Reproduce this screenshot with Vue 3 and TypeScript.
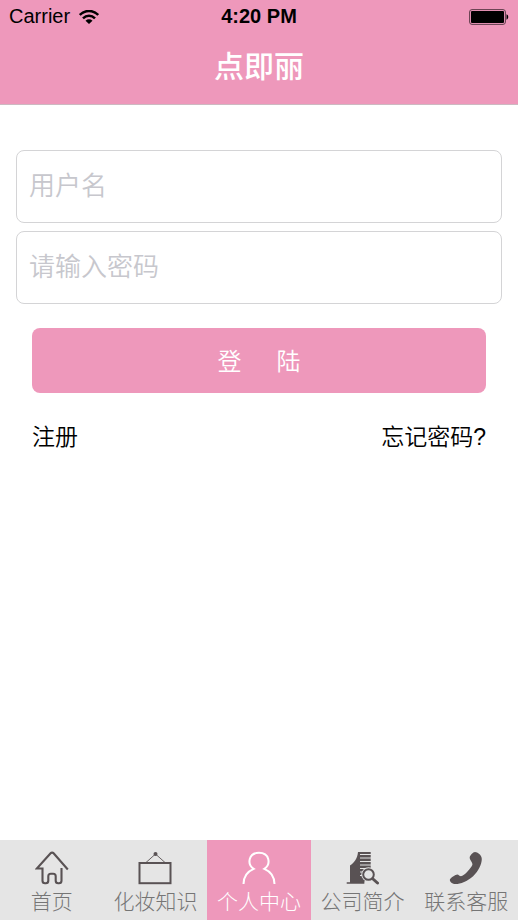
<script setup lang="ts">
import { ref } from 'vue'

interface Tab {
  id: string
  label: string
}

const tabs: Tab[] = [
  { id: 'home', label: '首页' },
  { id: 'makeup', label: '化妆知识' },
  { id: 'profile', label: '个人中心' },
  { id: 'company', label: '公司简介' },
  { id: 'service', label: '联系客服' },
]

const activeTab = ref('profile')
const username = ref('')
const password = ref('')
</script>

<template>
  <div class="screen">
    <header class="header">
      <div class="status">
        <div class="carrier">
          <span>Carrier</span>
          <svg class="wifi" viewBox="0 0 20 14" aria-hidden="true">
            <path d="M.8 5C6-.4 14-.4 19.200 5M4 8.400c3.500-3.500 8.500-3.500 12 0" fill="none" stroke="#000" stroke-width="2.500" />
            <path d="M10 14 6.500 10.700c2.100-1.800 4.900-1.800 7 0z" fill="#000" />
          </svg>
        </div>
        <span class="time">4:20 PM</span>
        <svg class="battery" viewBox="0 0 40 16" aria-hidden="true">
          <rect x=".6" y=".6" width="35.800" height="14.800" rx="2.400" fill="none" stroke="#5f3d4b" stroke-width="1" />
          <rect x="2" y="2" width="33" height="12" rx="1" fill="#000" />
          <path d="M37.500 5.300c2.300.8 2.300 4.600 0 5.400z" fill="#000" />
        </svg>
      </div>
      <h1 class="title">点即丽</h1>
    </header>

    <main class="content">
      <form class="form" @submit.prevent>
        <input v-model="username" class="field" type="text" placeholder="用户名" aria-label="用户名" />
        <input v-model="password" class="field" type="password" placeholder="请输入密码" aria-label="请输入密码" />
        <button class="submit" type="submit"><span>登</span><span>陆</span></button>
      </form>
      <div class="links">
        <a href="#register">注册</a>
        <a href="#forgot">忘记密码?</a>
      </div>
    </main>

    <nav class="tabs">
      <a
        v-for="tab in tabs"
        :key="tab.id"
        :href="'#' + tab.id"
        class="tab"
        :class="{ active: tab.id === activeTab }"
        @click="activeTab = tab.id"
      >
        <svg class="icon" viewBox="0 0 34 34" fill="none" stroke="currentColor" aria-hidden="true">
          <path
            v-if="tab.id === 'home'"
            d="M26.500 17v12.700a2.500 2.500 0 0 1-2.500 2.500h-.8a2.500 2.500 0 0 1-2.500-2.500v-4.400a2.500 2.500 0 0 0-2.500-2.500h-2.400a2.500 2.500 0 0 0-2.500 2.500v4.400a2.500 2.500 0 0 1-2.500 2.500h-.8a2.500 2.500 0 0 1-2.500-2.500V17.500H1.800L15.600 2.300a2 2 0 0 1 3 0L32.800 18.500"
            stroke-width="2.100"
          />
          <template v-else-if="tab.id === 'makeup'">
            <rect x="1.500" y="12" width="31" height="20.200" stroke-width="2" />
            <path d="M8 11.500 17.500 3 27 11.500" stroke-width=".9" />
            <circle cx="17.500" cy="3" r="2" fill="currentColor" stroke="none" />
          </template>
          <path
            v-else-if="tab.id === 'profile'"
            d="M1.500 33c0-7.500 3.800-12.500 10.200-15.200C4.700 13.200 6.500 1.800 17 1.800s12.300 11.400 5.300 16C28.700 20.500 32.500 25.500 32.500 33"
            stroke-width="2"
          />
          <template v-else-if="tab.id === 'company'">
            <path d="M.7 31.200H4V14.500c4-2.500 7.500-7 8-13.500h12.700V31.200h-6v1.600H.7z" fill="currentColor" stroke="none" />
            <path d="M14 3.500h11M14 7h11M14 10.500h11M14 14h11M14 17.500h11M14 21h4M14 24.500h3" stroke="#e5e5e5" stroke-width="1" />
            <path d="M18.500 29.500 26 28v5h-7.500z" fill="#e5e5e5" stroke="none" />
            <circle cx="22.500" cy="23.500" r="7.200" fill="#e5e5e5" stroke="none" />
            <circle cx="22.500" cy="23.500" r="5.300" stroke-width="2" />
            <path d="m27 28 4.500 4" stroke-width="3" stroke-linecap="round" />
          </template>
          <path
            v-else
            d="M20.700 6.300c.3-2 3.300-5.300 5.300-5.300 2.500 0 6.800 3 6.800 7 0 5-3.500 12.500-8.700 17.200C18.500 30.200 11.500 33 6.600 33 3.500 33 .5 31 .9 28.500c.2-1.500 5.800-5.100 7.400-5.100 1.500 0 2.500 2.200 4.300 1.700 3-.8 9.200-7.600 10.700-11.100.9-2-3-5.200-2.600-7.700z"
            fill="currentColor"
            stroke="none"
          />
        </svg>
        <span>{{ tab.label }}</span>
      </a>
    </nav>
  </div>
</template>

<style>
body {
  margin: 0;
}
</style>

<style scoped>
.screen {
  display: flex;
  flex-direction: column;
  min-height: 100vh;
  background: #fff;
  color: #000;
  font-family: "Liberation Sans", "Noto Sans CJK SC", sans-serif;
}

.header {
  background: #ee98bb;
  border-bottom: 1px solid #cdb9c1;
}

.status {
  display: grid;
  grid-template-columns: 1fr auto 1fr;
  align-items: center;
  height: 33px;
  padding: 0 9px;
  font-size: 20px;
}

.carrier {
  display: flex;
  align-items: center;
  gap: 9px;
}

.wifi {
  width: 20px;
  height: 14px;
}

.time {
  font-weight: 700;
}

.battery {
  width: 40px;
  height: 16px;
  justify-self: end;
}

.title {
  margin: 0;
  height: 71px;
  color: #fff;
  font-size: 30px;
  font-weight: 500;
  line-height: 68px;
  text-align: center;
}

.content {
  flex: 1;
  padding: 45px 16px 0;
}

.form {
  display: flex;
  flex-direction: column;
  gap: 8px;
}

.field {
  box-sizing: border-box;
  width: 100%;
  height: 73px;
  padding: 0 12px;
  border: 1px solid #d4d4d6;
  border-radius: 8px;
  background: #fff;
  color: #000;
  font: inherit;
  font-size: 26px;
  font-weight: 350;
}

.field::placeholder {
  color: #c7c7cd;
  opacity: 1;
}

.submit {
  display: flex;
  align-items: center;
  justify-content: center;
  gap: 35px;
  height: 65px;
  margin: 16px 16px 0;
  padding: 0 0 2px;
  border: 0;
  border-radius: 8px;
  background: #ee98bb;
  color: #fff;
  font: inherit;
  font-size: 24px;
  font-weight: 350;
}

.links {
  display: flex;
  justify-content: space-between;
  padding: 28px 16px;
  font-size: 23px;
  font-weight: 350;
  line-height: 32px;
}

.links a {
  color: #000;
  text-decoration: none;
}

.tabs {
  display: grid;
  grid-template-columns: repeat(5, 1fr);
  height: 80px;
  background: #e5e5e5;
}

.tab {
  display: flex;
  flex-direction: column;
  align-items: center;
  gap: 3px;
  padding-top: 11px;
  color: #595254;
  font-size: 21px;
  font-weight: 300;
  line-height: 28px;
  text-decoration: none;
  white-space: nowrap;
}

.tab span {
  color: #757575;
}

.tab.active {
  background: #ee98bb;
  color: #fff;
}

.tab.active span {
  color: #fff;
}

.icon {
  width: 34px;
  height: 34px;
}
</style>
